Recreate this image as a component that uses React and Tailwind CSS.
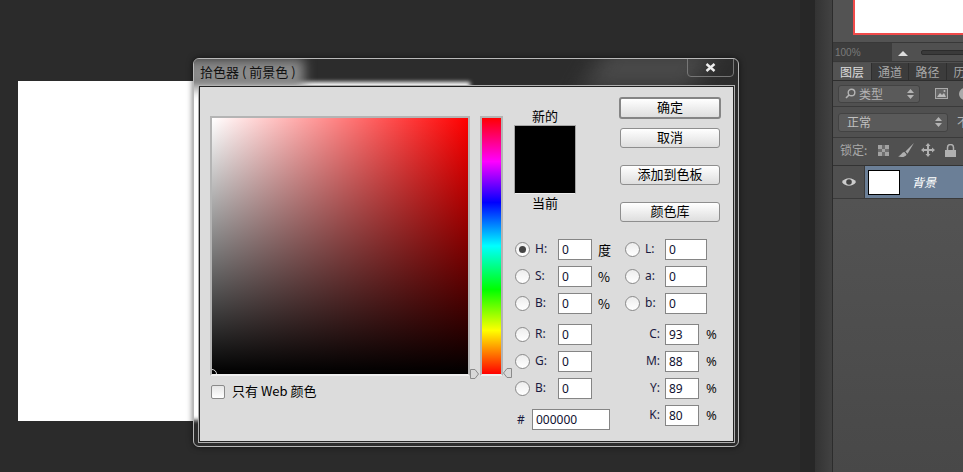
const cjk = "font-['Noto_Sans_CJK_SC','Liberation_Sans',sans-serif]";
const latin = "font-['Noto_Sans','Noto_Sans_CJK_SC',sans-serif]";

function Btn({ label, primary }) {
  return (
    <div
      className={`flex items-center justify-center pb-[2px] rounded-[3px] bg-linear-to-b from-white to-[#dedede] text-[13px] text-black ${cjk} ${
        primary ? "w-[102px] h-[22px] border-2 border-[#858585]" : "w-[100px] h-[20px] border border-[#8e8e8e]"
      }`}
    >
      {label}
    </div>
  );
}

function Radio({ on }) {
  return (
    <div className="w-[15px] h-[15px] shrink-0 rounded-full border border-[#8a8a8a] bg-linear-to-b from-[#ededed] to-white flex items-center justify-center">
      {on && <div className="w-[7px] h-[7px] rounded-full bg-[#444]" />}
    </div>
  );
}

function Input({ value, w }) {
  return (
    <div className={`${w} h-[21px] shrink-0 bg-white border border-[#858585] pl-[3px] flex items-center text-[12px] text-[#101030] ${latin}`}>
      {value}
    </div>
  );
}

function HsbRow({ label, unit, on }) {
  return (
    <div className="flex items-center h-[21px] ml-[1px]">
      <Radio on={on} />
      <span className={`ml-[5px] w-[23px] pb-[1px] text-[12px] text-[#1a1a40] ${latin}`}>{label}</span>
      <Input value="0" w="w-[34px]" />
      {unit && <span className={`ml-[6px] text-[13px] text-black ${cjk}`}>{unit}</span>}
    </div>
  );
}

function LabRow({ label }) {
  return (
    <div className="flex items-center h-[21px]">
      <Radio />
      <span className={`ml-[5px] w-[20px] pb-[1px] text-[12px] text-[#1a1a40] ${latin}`}>{label}</span>
      <Input value="0" w="w-[42px]" />
    </div>
  );
}

function CmykRow({ label, value }) {
  return (
    <div className="flex items-center h-[21px]">
      <span className={`w-[35px] pr-[5px] pb-[1px] text-right text-[12px] text-[#1a1a40] ${latin}`}>{label}</span>
      <Input value={value} w="w-[34px]" />
      <span className={`ml-[7px] text-[13px] text-[#111] ${latin}`}>%</span>
    </div>
  );
}

function Triangle({ className, flip }) {
  return (
    <svg width="9" height="10" viewBox="0 0 9 10" className={className}>
      <path d={flip ? "M8.5 .5V9.5H4L.5 5 4 .5Z" : "M.5 .5V9.5H5L8.5 5 5 .5Z"} fill="#d8d8d8" stroke="#8a8a8a" />
    </svg>
  );
}

function ColorPicker() {
  return (
    <div className="absolute left-[193px] top-[58px] w-[546px] h-[389px] rounded-[6px] border border-[#b8b8b8] bg-[#2c2c2c] overflow-hidden flex flex-col pl-[5px] pr-[4px] pb-[4px] shadow-[0_0_6px_rgba(0,0,0,0.6)]">
      {/* canvas showing through the glass */}
      <div className="absolute left-[-40px] top-[23px] w-[316px] h-[338px] bg-white blur-[2px]" />
      <div className="absolute left-[-10px] top-[0px] w-[120px] h-[30px] bg-[#8a8a8a] blur-[6px]" />
      <div className="absolute left-[400px] top-[-10px] w-[110px] h-[40px] bg-[#4a4a4a] blur-[12px] -skew-x-30" />

      <div className={`relative h-[27px] shrink-0 pl-[1px] pt-[3px] text-[13px] leading-[20px] text-[#111] ${cjk}`}>
        拾色器 ( 前景色 )
      </div>
      {/* close button */}
      <div className="absolute right-[4px] top-[-1px] w-[47px] h-[19px] rounded-b-[4px] border border-[#777] flex items-center justify-center">
        <svg width="11" height="9" viewBox="0 0 11 9">
          <path d="M1.5 1 9.5 8M9.5 1 1.5 8" stroke="#eee" strokeWidth="2.4" fill="none" />
        </svg>
      </div>

      <div className="relative flex-1 flex border border-[#222] bg-[#dcdcdc] shadow-[0_0_0_1px_#b0b0b0]">
        {/* field + web only */}
        <div className="ml-[10px] mt-[29px] w-[260px] relative">
          <div className="w-[260px] h-[260px] border-2 border-[#b4b4b4] border-b-[#efefef] bg-linear-to-r/srgb from-white to-[#f00] overflow-hidden relative">
            <div className="w-full h-full bg-linear-to-t/srgb from-black to-transparent" />
            <div className="absolute left-[-5px] bottom-[-5px] w-[10px] h-[10px] rounded-full border border-[#ddd]" />
          </div>
          <Triangle className="absolute left-[260px] top-[253px]" />
          <div className="mt-[9px] ml-[1px] flex items-center h-[14px]">
            <div className="w-[14px] h-[14px] rounded-[2px] border border-[#8a8a8a] bg-linear-to-b from-[#e6e6e6] to-white" />
            <span className={`ml-[7px] pb-[2px] leading-[14px] text-[13px] text-black ${cjk}`}>只有 Web 颜色</span>
          </div>
        </div>

        {/* hue strip */}
        <div className="ml-[10px] mt-[29px] w-[23px] h-[260px] relative">
          <div className="w-full h-full border-2 border-[#b4b4b4] border-b-[#efefef] bg-[linear-gradient(to_bottom,#f00,#f0f_17%,#00f_33%,#0ff_50%,#0f0_67%,#ff0_83%,#f00)]" />
          <Triangle flip className="absolute left-[23px] top-[252px]" />
        </div>

        {/* swatch, buttons, values */}
        <div className="ml-[11px] pt-[10px] flex-1">
          <div className="flex">
            <div className="w-[62px] pt-[11px] flex flex-col items-center">
              <span className={`h-[17px] leading-[15px] text-[13px] text-black ${cjk}`}>新的</span>
              <div className="w-[62px] h-[69px] bg-black border border-[#a5a5a5] border-b-[#efefef]" />
              <span className={`mt-[1px] h-[16px] leading-[16px] text-[13px] text-black ${cjk}`}>当前</span>
            </div>
            <div className="ml-[43px] w-[102px] flex flex-col items-center">
              <Btn label="确定" primary />
              <div className="mt-[9px]"><Btn label="取消" /></div>
              <div className="mt-[17px]"><Btn label="添加到色板" /></div>
              <div className="mt-[17px]"><Btn label="颜色库" /></div>
            </div>
          </div>

          <div className="mt-[17px] flex">
            <div className="w-[111px] flex flex-col gap-[6px]">
              <HsbRow label="H:" unit="度" on />
              <HsbRow label="S:" unit="%" />
              <HsbRow label="B:" unit="%" />
              <div className="mt-[4px]"><HsbRow label="R:" /></div>
              <HsbRow label="G:" />
              <HsbRow label="B:" />
              <div className="mt-[4px] flex items-center h-[21px]">
                <span className={`w-[18px] pl-[3px] text-[12px] text-[#1a1a40] ${latin}`}>#</span>
                <Input value="000000" w="w-[78px]" />
              </div>
            </div>
            <div className="flex flex-col gap-[6px]">
              <LabRow label="L:" />
              <LabRow label="a:" />
              <LabRow label="b:" />
              <div className="mt-[4px] ml-[5px]"><CmykRow label="C:" value="93" /></div>
              <div className="ml-[5px]"><CmykRow label="M:" value="88" /></div>
              <div className="ml-[5px]"><CmykRow label="Y:" value="89" /></div>
              <div className="ml-[5px]"><CmykRow label="K:" value="80" /></div>
            </div>
          </div>
        </div>
      </div>
    </div>
  );
}

function Tab({ label, active, w }) {
  return (
    <div
      className={`${w} h-[17px] shrink-0 flex items-center justify-center text-[12px] border-r border-[#2e2e2e] ${cjk} ${
        active ? "bg-[#535353] text-[#dcdcdc]" : "text-[#a8a8a8]"
      }`}
    >
      {label}
    </div>
  );
}

function Updown() {
  return (
    <svg width="7" height="10" viewBox="0 0 7 10" className="shrink-0">
      <path d="M3.5 0 7 4H0ZM3.5 10 0 6H7Z" fill="#b4b4b4" />
    </svg>
  );
}

function LayersPanel() {
  return (
    <div className="w-[131px] shrink-0 h-full bg-[#505050] border-l border-[#2c2c2c] flex flex-col overflow-hidden">
      {/* navigator preview */}
      <div className="h-[42px] shrink-0 bg-[#535353] pl-[20px]">
        <div className="w-[120px] h-[35px] bg-white border-2 border-t-0 border-r-0 border-[#f04a4a]" />
      </div>
      <div className="h-[20px] shrink-0 border-y border-[#383838] flex items-center">
        <div className="w-[59px] h-full shrink-0 bg-[#3d3d3d] pl-[2px] flex items-center text-[10px] text-[#7a7a7a] font-['Liberation_Sans',sans-serif]">100%</div>
        <svg width="10" height="5" viewBox="0 0 10 5" className="ml-[6px] mt-[3px] shrink-0">
          <path d="M5 0 10 5H0Z" fill="#ddd" />
        </svg>
        <div className="ml-[13px] w-[60px] h-[5px] rounded-[2px] bg-[#3a3a3a] border border-[#2c2c2c] shrink-0" />
      </div>
      {/* tabs */}
      <div className="h-[18px] mt-[1px] shrink-0 bg-[#3c3c3c] border-b border-[#2e2e2e] flex">
        <Tab label="图层" active w="w-[39px]" />
        <Tab label="通道" w="w-[37px]" />
        <Tab label="路径" w="w-[38px]" />
        <Tab label="历史" w="w-[38px]" />
      </div>
      {/* filter row */}
      <div className="h-[26px] shrink-0 border-b border-[#3a3a3a] pl-[5px] flex items-center">
        <div className={`w-[82px] h-[18px] shrink-0 rounded-[3px] bg-[#5a5a5a] border border-[#434343] pl-[6px] pr-[5px] flex items-center justify-between text-[12px] text-[#b4b4b4] ${cjk}`}>
          <span className="flex items-center gap-[3px]">
            <svg width="11" height="11" viewBox="0 0 11 11">
              <circle cx="6.5" cy="4.5" r="3.3" stroke="#b4b4b4" strokeWidth="1.4" fill="none" />
              <path d="M4 7 1 10" stroke="#b4b4b4" strokeWidth="1.6" />
            </svg>
            类型
          </span>
          <Updown />
        </div>
        <svg width="13" height="11" viewBox="0 0 13 11" className="ml-[15px] shrink-0">
          <rect x=".5" y=".5" width="12" height="10" fill="#666" stroke="#aaa" />
          <path d="M2 9 5 5 7 7 9 5 11 9Z" fill="#bbb" />
          <circle cx="9.5" cy="3" r="1" fill="#bbb" />
        </svg>
        <div className="ml-[11px] w-[12px] h-[12px] rounded-full bg-[#aaa] shrink-0" />
      </div>
      {/* blend mode */}
      <div className="h-[31px] shrink-0 border-b border-[#3a3a3a] pl-[5px] flex items-center">
        <div className={`w-[110px] h-[19px] shrink-0 rounded-[3px] bg-[#5a5a5a] border border-[#434343] pl-[8px] pr-[5px] flex items-center justify-between text-[12px] text-[#c0c0c0] ${cjk}`}>
          正常
          <Updown />
        </div>
        <span className={`ml-[9px] shrink-0 text-[12px] text-[#b4b4b4] ${cjk}`}>不透明度</span>
      </div>
      {/* lock row */}
      <div className="h-[28px] shrink-0 border-b border-[#333] pl-[7px] pb-[3px] flex items-center">
        <span className={`w-[38px] shrink-0 text-[12px] text-[#a8a8a8] ${cjk}`}>锁定:</span>
        <svg width="11" height="11" viewBox="0 0 11 11" className="shrink-0">
          <rect width="11" height="11" fill="#6e6e6e" />
          <path d="M0 0h4v4H0ZM7 0h4v4H7ZM4 4h3v3H4ZM0 7h4v4H0ZM7 7h4v4H7Z" fill="#a2a2a2" />
        </svg>
        <svg width="17" height="15" viewBox="0 0 16 14" className="ml-[9px] shrink-0">
          <path d="M15 0 7 8 9 10ZM6 8.5C3 9 3 12 0 12.500C3 14 8 13 8 10.500Z" fill="#b0b0b0" />
        </svg>
        <svg width="14" height="14" viewBox="0 0 14 14" className="ml-[6px] shrink-0">
          <path d="M7 0 9.500 3H8V6H11V4.500L14 7 11 9.500V8H8V11H9.500L7 14 4.500 11H6V8H3V9.500L0 7 3 4.500V6H6V3H4.500Z" fill="#b0b0b0" />
        </svg>
        <svg width="11" height="13" viewBox="0 0 11 13" className="ml-[10px] shrink-0">
          <path d="M2.500 6V3.500a3 3 0 0 1 6 0V6" stroke="#b0b0b0" strokeWidth="1.500" fill="none" />
          <rect y="6" width="11" height="7" fill="#b0b0b0" />
        </svg>
      </div>
      {/* layer row */}
      <div className="h-[33px] shrink-0 border-b border-[#3a3a3a] flex">
        <div className="w-[32px] border-r border-[#3a3a3a] flex items-center justify-center">
          <svg width="14" height="10" viewBox="0 0 14 10">
            <path d="M0 5C3 0 11 0 14 5 11 10 3 10 0 5Z" fill="#ccc" />
            <circle cx="7" cy="5" r="2.800" fill="#444" />
          </svg>
        </div>
        <div className="flex-1 bg-[#6b7f97] flex items-center pl-[3px]">
          <div className="w-[32px] h-[25px] bg-white border border-black shrink-0" />
          <span className={`ml-[12px] text-[12px] italic text-white ${cjk}`}>背景</span>
        </div>
      </div>
      <div className="flex-1 bg-linear-to-b from-[#535353] to-[#484848]" />
    </div>
  );
}

export default function App() {
  return (
    <div className="w-[963px] h-[472px] flex overflow-hidden bg-[#2b2b2b]">
      <div className="relative flex-1 flex h-full">
        <div className="flex-1 pt-[81px] pl-[18px]">
          <div className="w-[300px] h-[340px] bg-white" />
        </div>
        <div className="w-[15px] bg-[#272727]" />
        <div className="w-[17px] bg-linear-to-r from-[#333] to-[#424242]" />
        <ColorPicker />
      </div>
      <LayersPanel />
    </div>
  );
}
